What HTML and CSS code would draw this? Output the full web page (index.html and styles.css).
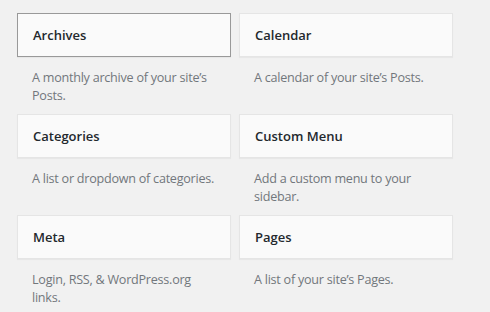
FILE: index.html
```html
<!DOCTYPE html>
<html>
<head>
<meta charset="utf-8">
<link rel="stylesheet" href="styles.css">
</head>
<body>
<div class="widget-list">
  <div class="widget">
    <div class="widget-top focused"><h3>Archives</h3></div>
    <p class="widget-description">A monthly archive of your site’s Posts.</p>
  </div>
  <div class="widget">
    <div class="widget-top"><h3>Calendar</h3></div>
    <p class="widget-description">A calendar of your site’s Posts.</p>
  </div>
  <div class="widget">
    <div class="widget-top"><h3>Categories</h3></div>
    <p class="widget-description">A list or dropdown of categories.</p>
  </div>
  <div class="widget">
    <div class="widget-top"><h3>Custom Menu</h3></div>
    <p class="widget-description">Add a custom menu to your sidebar.</p>
  </div>
  <div class="widget">
    <div class="widget-top"><h3>Meta</h3></div>
    <p class="widget-description">Login, RSS, &amp; WordPress.org links.</p>
  </div>
  <div class="widget">
    <div class="widget-top"><h3>Pages</h3></div>
    <p class="widget-description">A list of your site’s Pages.</p>
  </div>
</div>
</body>
</html>
```

FILE: styles.css
```css
html, body {
  margin: 0;
  padding: 0;
  background: #f1f1f1;
}
body {
  font-family: "Open Sans", "Liberation Sans", sans-serif;
  width: 490px;
  height: 312px;
  overflow: hidden;
}
.widget-list {
  display: grid;
  grid-template-columns: 214px 214px;
  column-gap: 8px;
  padding: 13px 0 0 17px;
}
.widget {
  height: 101px;
}
.widget-top {
  box-sizing: border-box;
  height: 44px;
  background: #fafafa;
  border: 1px solid #e5e5e5;
  box-shadow: 0 1px 1px rgba(0, 0, 0, 0.04);
  display: flex;
  align-items: center;
  padding: 0 15px;
}
.widget-top.focused {
  border-color: #999;
}
.widget-top h3 {
  margin: 0;
  font-size: 13px;
  font-weight: 600;
  line-height: 1;
  color: #23282d;
}
.widget-description {
  margin: 0;
  padding: 12px 15px 0 15px;
  font-size: 12.6px;
  letter-spacing: -0.25px;
  line-height: 18px;
  color: #72777c;
}
```
